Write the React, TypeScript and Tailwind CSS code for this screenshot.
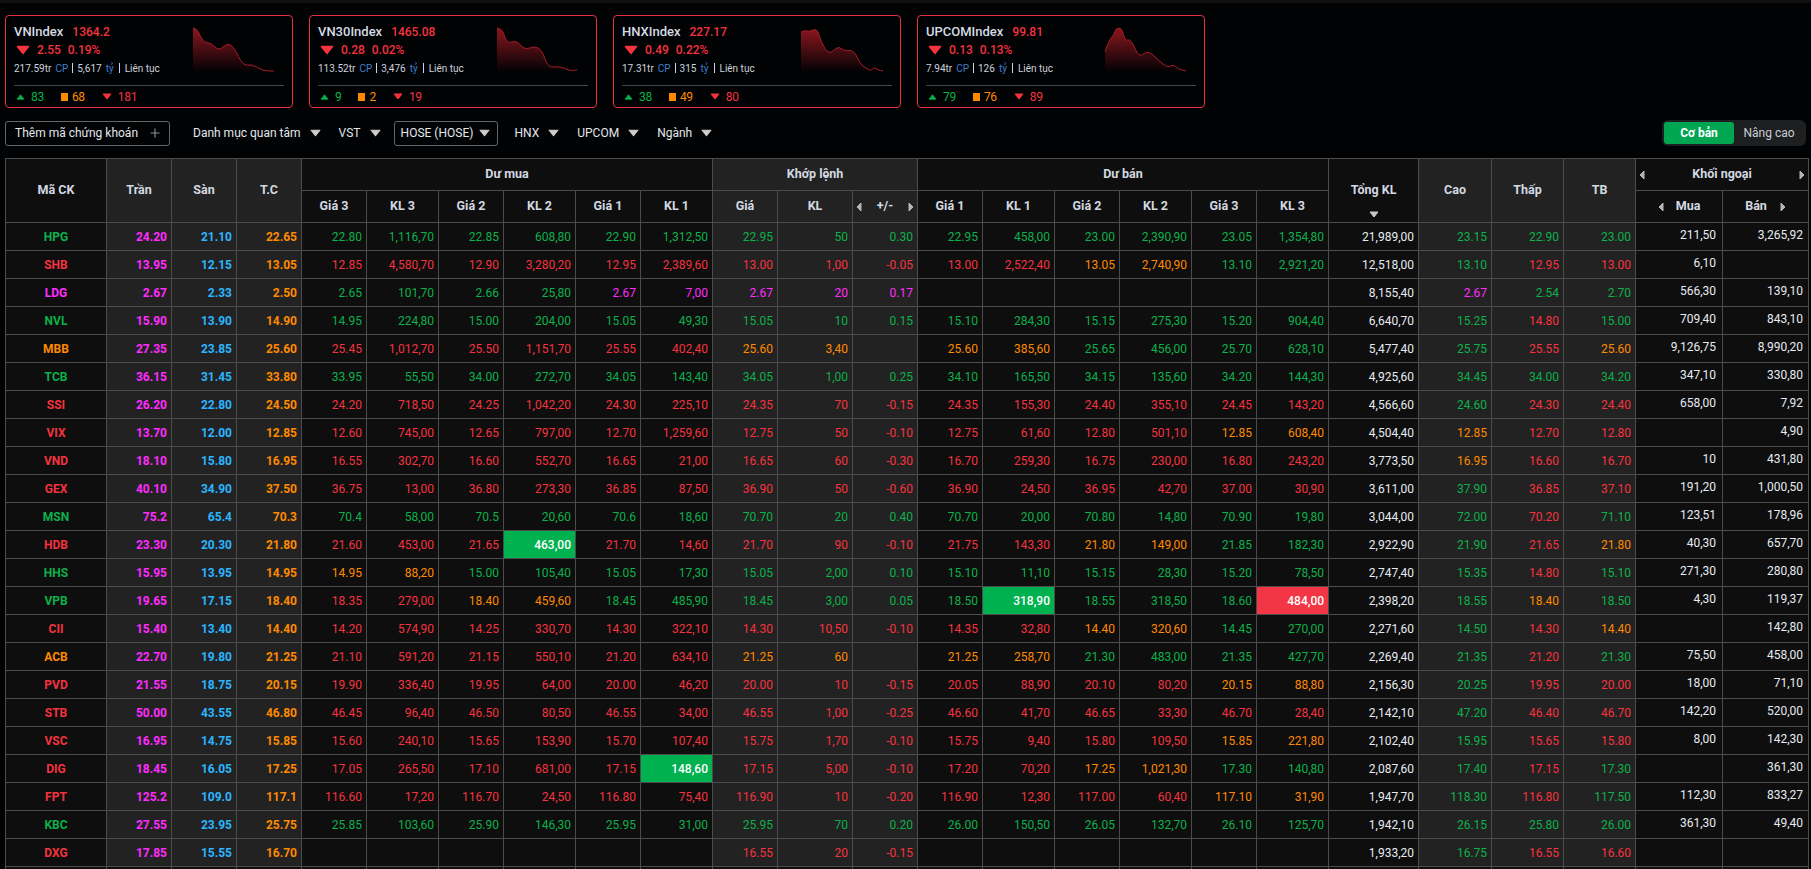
import React from "react";

type Pt = [number, number];

const smooth = (pts: Pt[]) => {
  let d = `M${pts[0][0]} ${pts[0][1]}`;
  for (let i = 1; i < pts.length - 1; i++) {
    const mx = (pts[i][0] + pts[i + 1][0]) / 2;
    const my = (pts[i][1] + pts[i + 1][1]) / 2;
    d += ` Q${pts[i][0]} ${pts[i][1]} ${mx} ${my}`;
  }
  const l = pts[pts.length - 1];
  d += ` L${l[0]} ${l[1]}`;
  return d;
};

const cards = [
  {
    name: "VNIndex", val: "1364.2", ch: "2.55", pct: "0.19%", cp: "217.59tr", ty: "5,617", up: "83", eq: "68", dn: "181",
    pts: [[0, 1], [4, 1.3], [10, 15], [18, 16], [26, 24], [34, 16], [41, 20], [50, 39], [59, 37], [70, 44], [81, 44]] as Pt[],
  },
  {
    name: "VN30Index", val: "1465.08", ch: "0.28", pct: "0.02%", cp: "113.52tr", ty: "3,476", up: "9", eq: "2", dn: "19",
    pts: [[0, 1], [5, 1], [10, 17], [19, 13], [28, 23], [37, 19], [45, 23], [51, 41], [63, 39], [73, 44], [80, 43]] as Pt[],
  },
  {
    name: "HNXIndex", val: "227.17", ch: "0.49", pct: "0.22%", cp: "17.31tr", ty: "315", up: "38", eq: "49", dn: "80",
    pts: [[0, 5], [4, 3], [8, 5], [16, 1], [20, 15], [28, 28], [37, 19], [43, 24], [53, 23], [59, 37], [65, 41], [70, 44], [73, 40], [77, 43], [82, 44]] as Pt[],
  },
  {
    name: "UPCOMIndex", val: "99.81", ch: "0.13", pct: "0.13%", cp: "7.94tr", ty: "126", up: "79", eq: "76", dn: "89",
    pts: [[0, 25], [4, 13], [9, 8], [11, 1], [17, 1], [20, 14], [26, 12], [34, 31], [43, 23], [53, 33], [63, 41], [68, 37], [73, 42], [81, 44]] as Pt[],
  },
];

const raw = `HPG 24.20 21.10 22.65|22.80 1,116,70 22.85 608,80 22.90 1,312,50|22.95 50 0.30|22.95 458,00 23.00 2,390,90 23.05 1,354,80|21,989,00|23.15 22.90 23.00|211,50 3,265,92
SHB 13.95 12.15 13.05|12.85 4,580,70 12.90 3,280,20 12.95 2,389,60|13.00 1,00 -0.05|13.00 2,522,40 13.05 2,740,90 13.10 2,921,20|12,518,00|13.10 12.95 13.00|6,10 _
LDG 2.67 2.33 2.50|2.65 101,70 2.66 25,80 2.67 7,00|2.67 20 0.17|_ _ _ _ _ _|8,155,40|2.67 2.54 2.70|566,30 139,10
NVL 15.90 13.90 14.90|14.95 224,80 15.00 204,00 15.05 49,30|15.05 10 0.15|15.10 284,30 15.15 275,30 15.20 904,40|6,640,70|15.25 14.80 15.00|709,40 843,10
MBB 27.35 23.85 25.60|25.45 1,012,70 25.50 1,151,70 25.55 402,40|25.60 3,40 _|25.60 385,60 25.65 456,00 25.70 628,10|5,477,40|25.75 25.55 25.60|9,126,75 8,990,20
TCB 36.15 31.45 33.80|33.95 55,50 34.00 272,70 34.05 143,40|34.05 1,00 0.25|34.10 165,50 34.15 135,60 34.20 144,30|4,925,60|34.45 34.00 34.20|347,10 330,80
SSI 26.20 22.80 24.50|24.20 718,50 24.25 1,042,20 24.30 225,10|24.35 70 -0.15|24.35 155,30 24.40 355,10 24.45 143,20|4,566,60|24.60 24.30 24.40|658,00 7,92
VIX 13.70 12.00 12.85|12.60 745,00 12.65 797,00 12.70 1,259,60|12.75 50 -0.10|12.75 61,60 12.80 501,10 12.85 608,40|4,504,40|12.85 12.70 12.80|_ 4,90
VND 18.10 15.80 16.95|16.55 302,70 16.60 552,70 16.65 21,00|16.65 60 -0.30|16.70 259,30 16.75 230,00 16.80 243,20|3,773,50|16.95 16.60 16.70|10 431,80
GEX 40.10 34.90 37.50|36.75 13,00 36.80 273,30 36.85 87,50|36.90 50 -0.60|36.90 24,50 36.95 42,70 37.00 30,90|3,611,00|37.90 36.85 37.10|191,20 1,000,50
MSN 75.2 65.4 70.3|70.4 58,00 70.5 20,60 70.6 18,60|70.70 20 0.40|70.70 20,00 70.80 14,80 70.90 19,80|3,044,00|72.00 70.20 71.10|123,51 178,96
HDB 23.30 20.30 21.80|21.60 453,00 21.65 463,00 21.70 14,60|21.70 90 -0.10|21.75 143,30 21.80 149,00 21.85 182,30|2,922,90|21.90 21.65 21.80|40,30 657,70
HHS 15.95 13.95 14.95|14.95 88,20 15.00 105,40 15.05 17,30|15.05 2,00 0.10|15.10 11,10 15.15 28,30 15.20 78,50|2,747,40|15.35 14.80 15.10|271,30 280,80
VPB 19.65 17.15 18.40|18.35 279,00 18.40 459,60 18.45 485,90|18.45 3,00 0.05|18.50 318,90 18.55 318,50 18.60 484,00|2,398,20|18.55 18.40 18.50|4,30 119,37
CII 15.40 13.40 14.40|14.20 574,90 14.25 330,70 14.30 322,10|14.30 10,50 -0.10|14.35 32,80 14.40 320,60 14.45 270,00|2,271,60|14.50 14.30 14.40|_ 142,80
ACB 22.70 19.80 21.25|21.10 591,20 21.15 550,10 21.20 634,10|21.25 60 _|21.25 258,70 21.30 483,00 21.35 427,70|2,269,40|21.35 21.20 21.30|75,50 458,00
PVD 21.55 18.75 20.15|19.90 336,40 19.95 64,00 20.00 46,20|20.00 10 -0.15|20.05 88,90 20.10 80,20 20.15 88,80|2,156,30|20.25 19.95 20.00|18,00 71,10
STB 50.00 43.55 46.80|46.45 96,40 46.50 80,50 46.55 34,00|46.55 1,00 -0.25|46.60 41,70 46.65 33,30 46.70 28,40|2,142,10|47.20 46.40 46.70|142,20 520,00
VSC 16.95 14.75 15.85|15.60 240,10 15.65 153,90 15.70 107,40|15.75 1,70 -0.10|15.75 9,40 15.80 109,50 15.85 221,80|2,102,40|15.95 15.65 15.80|8,00 142,30
DIG 18.45 16.05 17.25|17.05 265,50 17.10 681,00 17.15 148,60|17.15 5,00 -0.10|17.20 70,20 17.25 1,021,30 17.30 140,80|2,087,60|17.40 17.15 17.30|_ 361,30
FPT 125.2 109.0 117.1|116.60 17,20 116.70 24,50 116.80 75,40|116.90 10 -0.20|116.90 12,30 117.00 60,40 117.10 31,90|1,947,70|118.30 116.80 117.50|112,30 833,27
KBC 27.55 23.95 25.75|25.85 103,60 25.90 146,30 25.95 31,00|25.95 70 0.20|26.00 150,50 26.05 132,70 26.10 125,70|1,942,10|26.15 25.80 26.00|361,30 49,40
DXG 17.85 15.55 16.70|_ _ _ _ _ _|16.55 20 -0.15|_ _ _ _ _ _|1,933,20|16.75 16.55 16.60|_ _`;

const rows = raw.split("\n").map((l) => {
  const p = l.split("|").map((s) => s.split(" ").map((x) => (x === "_" ? "" : x)));
  return { head: p[0], buy: p[1], match: p[2], sell: p[3], total: p[4][0], hl: p[5], fx: p[6] };
});

const HL: Record<string, string> = {
  "HDB-463,00": "bg-[#00b14f]",
  "VPB-318,90": "bg-[#00b14f]",
  "VPB-484,00": "bg-[#f23645]",
  "DIG-148,60": "bg-[#00b14f]",
};

const GREEN = "text-[#0db14b]";
const RED = "text-[#f5333f]";
const ORANGE = "text-[#ff8a00]";
const PURPLE = "text-[#ff2cff]";
const BLUE = "text-[#2bb5ff]";

const colorOf = (v: string, head: string[]) => {
  if (!v) return "";
  const n = parseFloat(v);
  const tran = parseFloat(head[1]);
  const san = parseFloat(head[2]);
  const tc = parseFloat(head[3]);
  if (n === tran) return PURPLE;
  if (n === san) return BLUE;
  if (n === tc) return ORANGE;
  return n > tc ? GREEN : RED;
};

const DownTri = ({ className = "" }: { className?: string }) => (
  <svg viewBox="0 0 10 7" className={className}>
    <path d="M1 1 H9 L5 6 Z" fill="currentColor" stroke="currentColor" strokeWidth="1" strokeLinejoin="round" />
  </svg>
);
const UpTri = ({ className = "" }: { className?: string }) => (
  <svg viewBox="0 0 10 7" className={className}>
    <path d="M1 6 H9 L5 1 Z" fill="currentColor" stroke="currentColor" strokeWidth="1" strokeLinejoin="round" />
  </svg>
);
const LeftTri = () => (
  <svg viewBox="0 0 6 10" className="w-[6px] h-[10px] text-[#b5b5b5] shrink-0">
    <path d="M5 1 V9 L1 5 Z" fill="currentColor" stroke="currentColor" strokeWidth="1" strokeLinejoin="round" />
  </svg>
);
const RightTri = () => (
  <svg viewBox="0 0 6 10" className="w-[6px] h-[10px] text-[#b5b5b5] shrink-0">
    <path d="M1 1 V9 L5 5 Z" fill="currentColor" stroke="currentColor" strokeWidth="1" strokeLinejoin="round" />
  </svg>
);

const Card = ({ c, i }: { c: (typeof cards)[number]; i: number }) => {
  const line = smooth(c.pts);
  const lastX = c.pts[c.pts.length - 1][0];
  const firstX = c.pts[0][0];
  const area = `${line} L${lastX} 45 L${firstX} 45 Z`;
  const gid = `spark-${i}`;
  return (
    <div className="w-[288px] h-[93px] border border-[#e5303e] rounded-[4px] px-[8px] pt-[7px] flex flex-col shrink-0">
      <div className="flex h-[54px]">
        <div className="w-[179px] shrink-0">
          <div className="flex items-center h-[18px] gap-[9px]">
            <span className="text-[13px] font-medium text-[#d5dbe3]">{c.name}</span>
            <span className="text-[12px] font-medium text-[#f5333f]">{c.val}</span>
          </div>
          <div className="flex items-center h-[18px] text-[12px] font-medium text-[#f5333f]">
            <DownTri className="w-[14px] h-[10px] ml-[2px] mr-[7px]" />
            <span className="mr-[7px]">{c.ch}</span>
            <span>{c.pct}</span>
          </div>
          <div className="flex items-center h-[18px] text-[10px] text-[#ccd3dc]">
            <span>{c.cp}</span>
            <span className="text-[#3f7fd0] ml-[4px]">CP</span>
            <span className="w-px h-[10px] bg-[#ccd3dc] mx-[4px]" />
            <span>{c.ty}</span>
            <span className="text-[#3f7fd0] ml-[4px]">tỷ</span>
            <span className="w-px h-[10px] bg-[#ccd3dc] mx-[5px]" />
            <span>Liên tục</span>
          </div>
        </div>
        <svg viewBox="0 0 82 45" className="w-[82px] h-[45px] mt-[4px]">
          <defs>
            <linearGradient id={gid} x1="0" y1="0" x2="0" y2="1">
              <stop offset="0%" stopColor="#8a161e" />
              <stop offset="100%" stopColor="#8a161e" stopOpacity="0" />
            </linearGradient>
          </defs>
          <path d={area} fill={`url(#${gid})`} />
          <path d={line} fill="none" stroke="#a51c26" strokeWidth="1" />
        </svg>
      </div>
      <div className="border-t border-[#444] mt-[8px] flex items-center gap-[17px] h-[22px] text-[12px] tracking-[-0.3px] pl-[2px]">
        <div className="flex items-center gap-[6px] text-[#0db14b]">
          <UpTri className="w-[9px] h-[6px]" />
          <span>{c.up}</span>
        </div>
        <div className="flex items-center gap-[4px] text-[#ff8a00]">
          <span className="w-[7px] h-[8px] bg-[#ff8a00]" />
          <span>{c.eq}</span>
        </div>
        <div className="flex items-center gap-[6px] text-[#f5333f]">
          <DownTri className="w-[10px] h-[7px]" />
          <span>{c.dn}</span>
        </div>
      </div>
    </div>
  );
};

const Menu = ({ label, boxed }: { label: string; boxed?: boolean }) => (
  <div
    className={
      boxed
        ? "flex items-center h-[25px] w-[104px] -ml-[5px] -mr-[1px] justify-center gap-[6px] border border-[#666] rounded-[3px] text-[12px] text-[#e3e7ec] shrink-0"
        : "flex items-center h-[25px] gap-[9px] text-[12px] text-[#e3e7ec] shrink-0"
    }
  >
    <span>{label}</span>
    <DownTri className="w-[11px] h-[8px] text-[#cfcfcf]" />
  </div>
);

const B = "border border-[#4c4c4c]";
const TH = `${B} text-[12.5px] font-bold text-center align-middle text-[#d3d9e0]`;
const DARK = "bg-[#0e0e0e]";
const GREY = "bg-[#222222]";

const widths = [
  "w-[101px]", "w-[65px]", "w-[65px]", "w-[65px]", "w-[65px]", "w-[72px]", "w-[65px]", "w-[72px]", "w-[65px]", "w-[72px]",
  "w-[65px]", "w-[75px]", "w-[65px]", "w-[65px]", "w-[72px]", "w-[65px]", "w-[72px]", "w-[65px]", "w-[72px]", "w-[90px]",
  "w-[73px]", "w-[72px]", "w-[72px]", "w-[87px]", "w-[86px]",
];

const Num = ({ v, color, grey, sym }: { v: string; color: string; grey?: boolean; sym?: string }) => {
  const hl = sym ? HL[`${sym}-${v}`] : undefined;
  return (
    <td
      className={`${B} text-right pr-[4px] text-[12px] ${hl ? `${hl} text-white font-medium` : `${grey ? GREY : DARK} ${color}`}`}
    >
      {v}
    </td>
  );
};

export default function App() {
  return (
    <div className="h-screen overflow-hidden bg-[#010204] font-[Roboto,sans-serif]">
      <div className="h-[3px] bg-[#101010]" />
      <div className="flex gap-[16px] pl-[5px] mt-[12px]">
        {cards.map((c, i) => (
          <Card key={c.name} c={c} i={i} />
        ))}
      </div>
      <div className="flex items-center mt-[12px] pl-[5px] pr-[5px] h-[26px]">
        <div className="flex items-center justify-between w-[165px] h-[25px] border border-[#666] rounded-[3px] pl-[9px] pr-[9px] text-[12px] text-[#e3e7ec] shrink-0">
          <span>Thêm mã chứng khoán</span>
          <svg viewBox="0 0 10 10" className="w-[10px] h-[10px] text-[#8d8d8d]">
            <path d="M5 0.5 V9.5 M0.5 5 H9.5" stroke="currentColor" strokeWidth="1.2" />
          </svg>
        </div>
        <div className="flex items-center ml-[23px] gap-[18px]">
          <Menu label="Danh mục quan tâm" />
          <Menu label="VST" />
          <Menu label="HOSE (HOSE)" boxed />
          <Menu label="HNX" />
          <Menu label="UPCOM" />
          <Menu label="Ngành" />
        </div>
        <div className="ml-auto flex items-center w-[144px] h-[26px] bg-[#1d1f21] rounded-[6px] px-[2px] text-[12px]">
          <div className="w-[70px] h-[22px] rounded-[3px] bg-[#00a651] text-white font-bold flex items-center justify-center">Cơ bản</div>
          <div className="flex-1 text-center text-[#c8ced5]">Nâng cao</div>
        </div>
      </div>
      <div className="pl-[5px] mt-[12px]">
        <table className="table-fixed border-collapse w-[1803px]">
          <colgroup>
            {widths.map((w, i) => (
              <col key={i} className={w} />
            ))}
          </colgroup>
          <thead>
            <tr className="h-[32px]">
              <th rowSpan={2} className={`${TH} ${DARK}`}>Mã CK</th>
              <th rowSpan={2} className={`${TH} ${GREY}`}>Trần</th>
              <th rowSpan={2} className={`${TH} ${GREY}`}>Sàn</th>
              <th rowSpan={2} className={`${TH} ${GREY}`}>T.C</th>
              <th colSpan={6} className={`${TH} ${DARK}`}>Dư mua</th>
              <th colSpan={3} className={`${TH} ${GREY}`}>Khớp lệnh</th>
              <th colSpan={6} className={`${TH} ${DARK}`}>Dư bán</th>
              <th rowSpan={2} className={`${TH} ${DARK} relative`}>
                Tổng KL
                <DownTri className="absolute bottom-[4px] left-[40px] w-[10px] h-[7px] text-[#c9c9c9]" />
              </th>
              <th rowSpan={2} className={`${TH} ${GREY}`}>Cao</th>
              <th rowSpan={2} className={`${TH} ${GREY}`}>Thấp</th>
              <th rowSpan={2} className={`${TH} ${GREY}`}>TB</th>
              <th colSpan={2} className={`${TH} ${DARK}`}>
                <div className="flex items-center justify-between px-[3px]">
                  <LeftTri />
                  <span>Khối ngoại</span>
                  <RightTri />
                </div>
              </th>
            </tr>
            <tr className="h-[32px]">
              {["Giá 3", "KL 3", "Giá 2", "KL 2", "Giá 1", "KL 1"].map((h) => (
                <th key={`b${h}`} className={`${TH} ${DARK}`}>{h}</th>
              ))}
              <th className={`${TH} ${GREY}`}>Giá</th>
              <th className={`${TH} ${GREY}`}>KL</th>
              <th className={`${TH} ${GREY}`}>
                <div className="flex items-center justify-between px-[3px]">
                  <LeftTri />
                  <span>+/-</span>
                  <RightTri />
                </div>
              </th>
              {["Giá 1", "KL 1", "Giá 2", "KL 2", "Giá 3", "KL 3"].map((h) => (
                <th key={`s${h}`} className={`${TH} ${DARK}`}>{h}</th>
              ))}
              <th className={`${TH} ${DARK}`}>
                <div className="flex items-center justify-center gap-[12px]">
                  <LeftTri />
                  <span>Mua</span>
                </div>
              </th>
              <th className={`${TH} ${DARK}`}>
                <div className="flex items-center justify-center gap-[13px]">
                  <span>Bán</span>
                  <RightTri />
                </div>
              </th>
            </tr>
          </thead>
          <tbody>
            {rows.map((r) => {
              const sym = r.head[0];
              const mc = colorOf(r.match[0], r.head);
              return (
                <tr key={sym} className="h-[28px]">
                  <td className={`${B} ${DARK} ${mc} text-center text-[12px] font-bold`}>{sym}</td>
                  <td className={`${B} ${GREY} ${PURPLE} text-right pr-[4px] text-[12px] font-bold`}>{r.head[1]}</td>
                  <td className={`${B} ${GREY} ${BLUE} text-right pr-[4px] text-[12px] font-bold`}>{r.head[2]}</td>
                  <td className={`${B} ${GREY} ${ORANGE} text-right pr-[4px] text-[12px] font-bold`}>{r.head[3]}</td>
                  {[0, 2, 4].map((k) => {
                    const c = colorOf(r.buy[k], r.head);
                    return (
                      <React.Fragment key={k}>
                        <Num v={r.buy[k]} color={c} />
                        <Num v={r.buy[k + 1]} color={c} sym={sym} />
                      </React.Fragment>
                    );
                  })}
                  <Num v={r.match[0]} color={mc} grey />
                  <Num v={r.match[1]} color={mc} grey />
                  <Num v={r.match[2]} color={mc} grey />
                  {[0, 2, 4].map((k) => {
                    const c = colorOf(r.sell[k], r.head);
                    return (
                      <React.Fragment key={k}>
                        <Num v={r.sell[k]} color={c} />
                        <Num v={r.sell[k + 1]} color={c} sym={sym} />
                      </React.Fragment>
                    );
                  })}
                  <Num v={r.total} color="text-[#e6ebf1]" />
                  {r.hl.map((v, k) => (
                    <Num key={k} v={v} color={colorOf(v, r.head)} grey />
                  ))}
                  <td className={`${B} ${DARK} text-right pr-[6px] pb-[3px] text-[12px] text-[#e6ebf1]`}>{r.fx[0]}</td>
                  <td className={`${B} ${DARK} text-right pr-[5px] pb-[3px] text-[12px] text-[#e6ebf1]`}>{r.fx[1]}</td>
                </tr>
              );
            })}
            <tr className="h-[28px]">
              {widths.map((_, i) => (
                <td key={i} className={`${B} ${DARK}`} />
              ))}
            </tr>
          </tbody>
        </table>
      </div>
    </div>
  );
}
